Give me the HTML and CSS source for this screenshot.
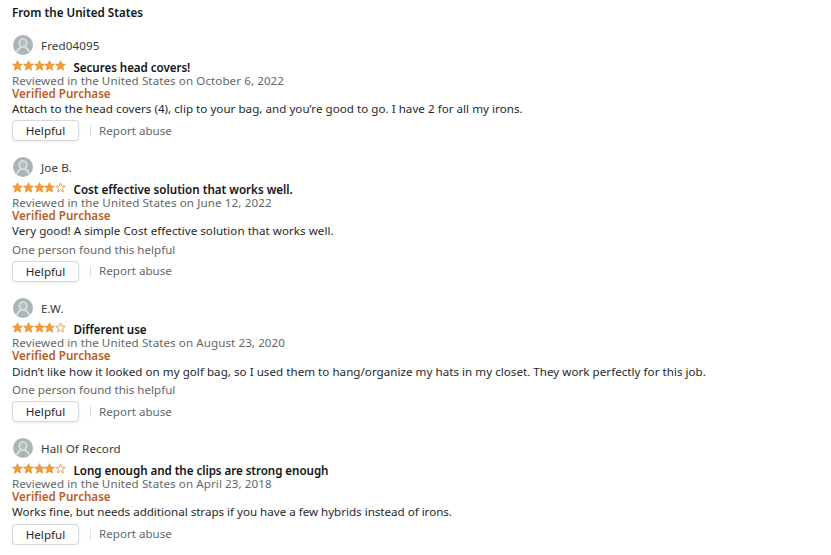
FILE: index.html
```html
<!DOCTYPE html>
<html lang="en">
<head>
<meta charset="utf-8">
<title>Customer reviews</title>
<link rel="stylesheet" href="styles.css">
</head>
<body>
<svg class="defs" aria-hidden="true">
  <symbol id="avatar" viewBox="0 0 20 20">
    <circle cx="10" cy="10" r="10" fill="#abb5b6"/>
    <path d="M4 17.200c.3-2.700 1.500-4 3.800-4.700M16 17.200c-.3-2.700-1.500-4-3.800-4.700" fill="none" stroke="#dde3e3" stroke-width="1.700"/>
    <ellipse cx="10" cy="8" rx="3.700" ry="4.200" fill="#b5bebf" stroke="#dde3e3" stroke-width="1.600"/>
  </symbol>
  <symbol id="star" viewBox="0 0 11 11">
    <path d="M5.500.7 6.900 4l3.500.3-2.700 2.300.9 3.500-3.100-1.900-3.100 1.900.9-3.500L.6 4.300 4.100 4z" fill="#fb9b2c" stroke="#e08a2c" stroke-width=".7"/>
  </symbol>
  <symbol id="star-empty" viewBox="0 0 11 11">
    <path d="M5.500.9 6.800 4.100l3.400.3-2.600 2.200.8 3.300-2.900-1.800-2.900 1.800.8-3.300L.8 4.400 4.200 4.100z" fill="#fffaf2" stroke="#dc9851" stroke-width=".9"/>
  </symbol>
</svg>
<main class="reviews">
  <h1 class="heading">From the United States</h1>

  <article class="review first">
    <div class="profile"><svg class="avatar"><use href="#avatar"/></svg><span class="name">Fred04095</span></div>
    <div class="title-row">
      <span class="stars"><svg><use href="#star"/></svg><svg><use href="#star"/></svg><svg><use href="#star"/></svg><svg><use href="#star"/></svg><svg><use href="#star"/></svg></span>
      <h2 class="title tight">Secures head covers!</h2>
    </div>
    <div class="date">Reviewed in the United States on October 6, 2022</div>
    <div class="verified">Verified Purchase</div>
    <p class="body">Attach to the head covers (4), clip to your bag, and you’re good to go. I have 2 for all my irons.</p>
    <div class="actions"><button class="helpful">Helpful</button><span class="divider"></span><a class="report">Report abuse</a></div>
  </article>

  <article class="review second">
    <div class="profile"><svg class="avatar"><use href="#avatar"/></svg><span class="name">Joe B.</span></div>
    <div class="title-row">
      <span class="stars"><svg><use href="#star"/></svg><svg><use href="#star"/></svg><svg><use href="#star"/></svg><svg><use href="#star"/></svg><svg><use href="#star-empty"/></svg></span>
      <h2 class="title">Cost effective solution that works well.</h2>
    </div>
    <div class="date">Reviewed in the United States on June 12, 2022</div>
    <div class="verified">Verified Purchase</div>
    <p class="body">Very good! A simple Cost effective solution that works well.</p>
    <div class="votes">One person found this helpful</div>
    <div class="actions"><button class="helpful">Helpful</button><span class="divider"></span><a class="report">Report abuse</a></div>
  </article>

  <article class="review third">
    <div class="profile"><svg class="avatar"><use href="#avatar"/></svg><span class="name">E.W.</span></div>
    <div class="title-row">
      <span class="stars"><svg><use href="#star"/></svg><svg><use href="#star"/></svg><svg><use href="#star"/></svg><svg><use href="#star"/></svg><svg><use href="#star-empty"/></svg></span>
      <h2 class="title tight">Different use</h2>
    </div>
    <div class="date">Reviewed in the United States on August 23, 2020</div>
    <div class="verified">Verified Purchase</div>
    <p class="body">Didn’t like how it looked on my golf bag, so I used them to hang/organize my hats in my closet. They work perfectly for this job.</p>
    <div class="votes">One person found this helpful</div>
    <div class="actions"><button class="helpful">Helpful</button><span class="divider"></span><a class="report">Report abuse</a></div>
  </article>

  <article class="review fourth">
    <div class="profile"><svg class="avatar"><use href="#avatar"/></svg><span class="name">Hall Of Record</span></div>
    <div class="title-row">
      <span class="stars"><svg><use href="#star"/></svg><svg><use href="#star"/></svg><svg><use href="#star"/></svg><svg><use href="#star"/></svg><svg><use href="#star-empty"/></svg></span>
      <h2 class="title tight">Long enough and the clips are strong enough</h2>
    </div>
    <div class="date">Reviewed in the United States on April 23, 2018</div>
    <div class="verified">Verified Purchase</div>
    <p class="body">Works fine, but needs additional straps if you have a few hybrids instead of irons.</p>
    <div class="actions"><button class="helpful">Helpful</button><span class="divider"></span><a class="report">Report abuse</a></div>
  </article>
</main>
</body>
</html>
```
FILE: styles.css
```css
* { box-sizing: border-box; }
body {
  margin: 0;
  background: #fff;
  color: #24292b;
  font: 11.6px/13px "Noto Sans", "Open Sans", sans-serif;
}
.defs { display: none; }
.reviews { padding: 6px 12px 0; }
.heading, .title, .body { margin: 0; font-size: 11.6px; white-space: nowrap; }
.heading, .title { font-weight: 600; color: #111517; }
.heading { line-height: 14px; letter-spacing: .03px; }
.review { display: flex; flex-direction: column; height: 141px; }
.first { height: 122px; margin-top: 15px; }
.third { height: 140px; }
.fourth { height: 107px; }
.profile { display: flex; align-items: center; gap: 8px; height: 20px; padding-left: 1px; }
.avatar { width: 20px; height: 20px; }
.name { padding-top: 1px; letter-spacing: .12px; color: #34393b; }
.title-row { display: flex; align-items: flex-start; gap: 7.5px; height: 19px; }
.stars { display: flex; width: 54px; height: 11px; margin-top: 5px; }
.stars svg { width: 11px; height: 11px; flex: none; margin-right: -.2px; }
.title { padding-top: 6px; }
.third .stars { margin-top: 4px; }
.third .title { padding-top: 5px; }
.third .title-row { height: 18px; }
.fourth .title-row { height: 20px; }
.tight { letter-spacing: -.05px; }
.date { letter-spacing: .08px; color: #626869; }
.second .date { letter-spacing: .11px; }
.verified { font-weight: 600; color: #b95e2b; }
.body { margin-top: 2px; line-height: 14px; letter-spacing: .03px; }
.third .body { margin-top: 3px; }
.fourth .body { letter-spacing: -.01px; }
.votes { margin-top: 5px; color: #626869; }
.third .votes { margin-top: 4px; }
.actions { display: flex; align-items: center; height: 21px; margin-top: 5px; }
.first .actions { margin-top: 4px; }
.helpful {
  width: 67px;
  height: 21px;
  padding: 0;
  border: 1px solid #d5d9d9;
  border-radius: 4px;
  background: #fff;
  box-shadow: 0 1px 2px rgba(213, 217, 217, .5);
  color: #24292b;
  font: inherit;
  letter-spacing: .05px;
}
.divider { width: 1px; height: 11px; margin: 0 8px 0 11px; background: #dcdfdf; }
.report { padding-bottom: 1px; color: #626869; }
.second .report, .fourth .report { padding-bottom: 2px; }
```
